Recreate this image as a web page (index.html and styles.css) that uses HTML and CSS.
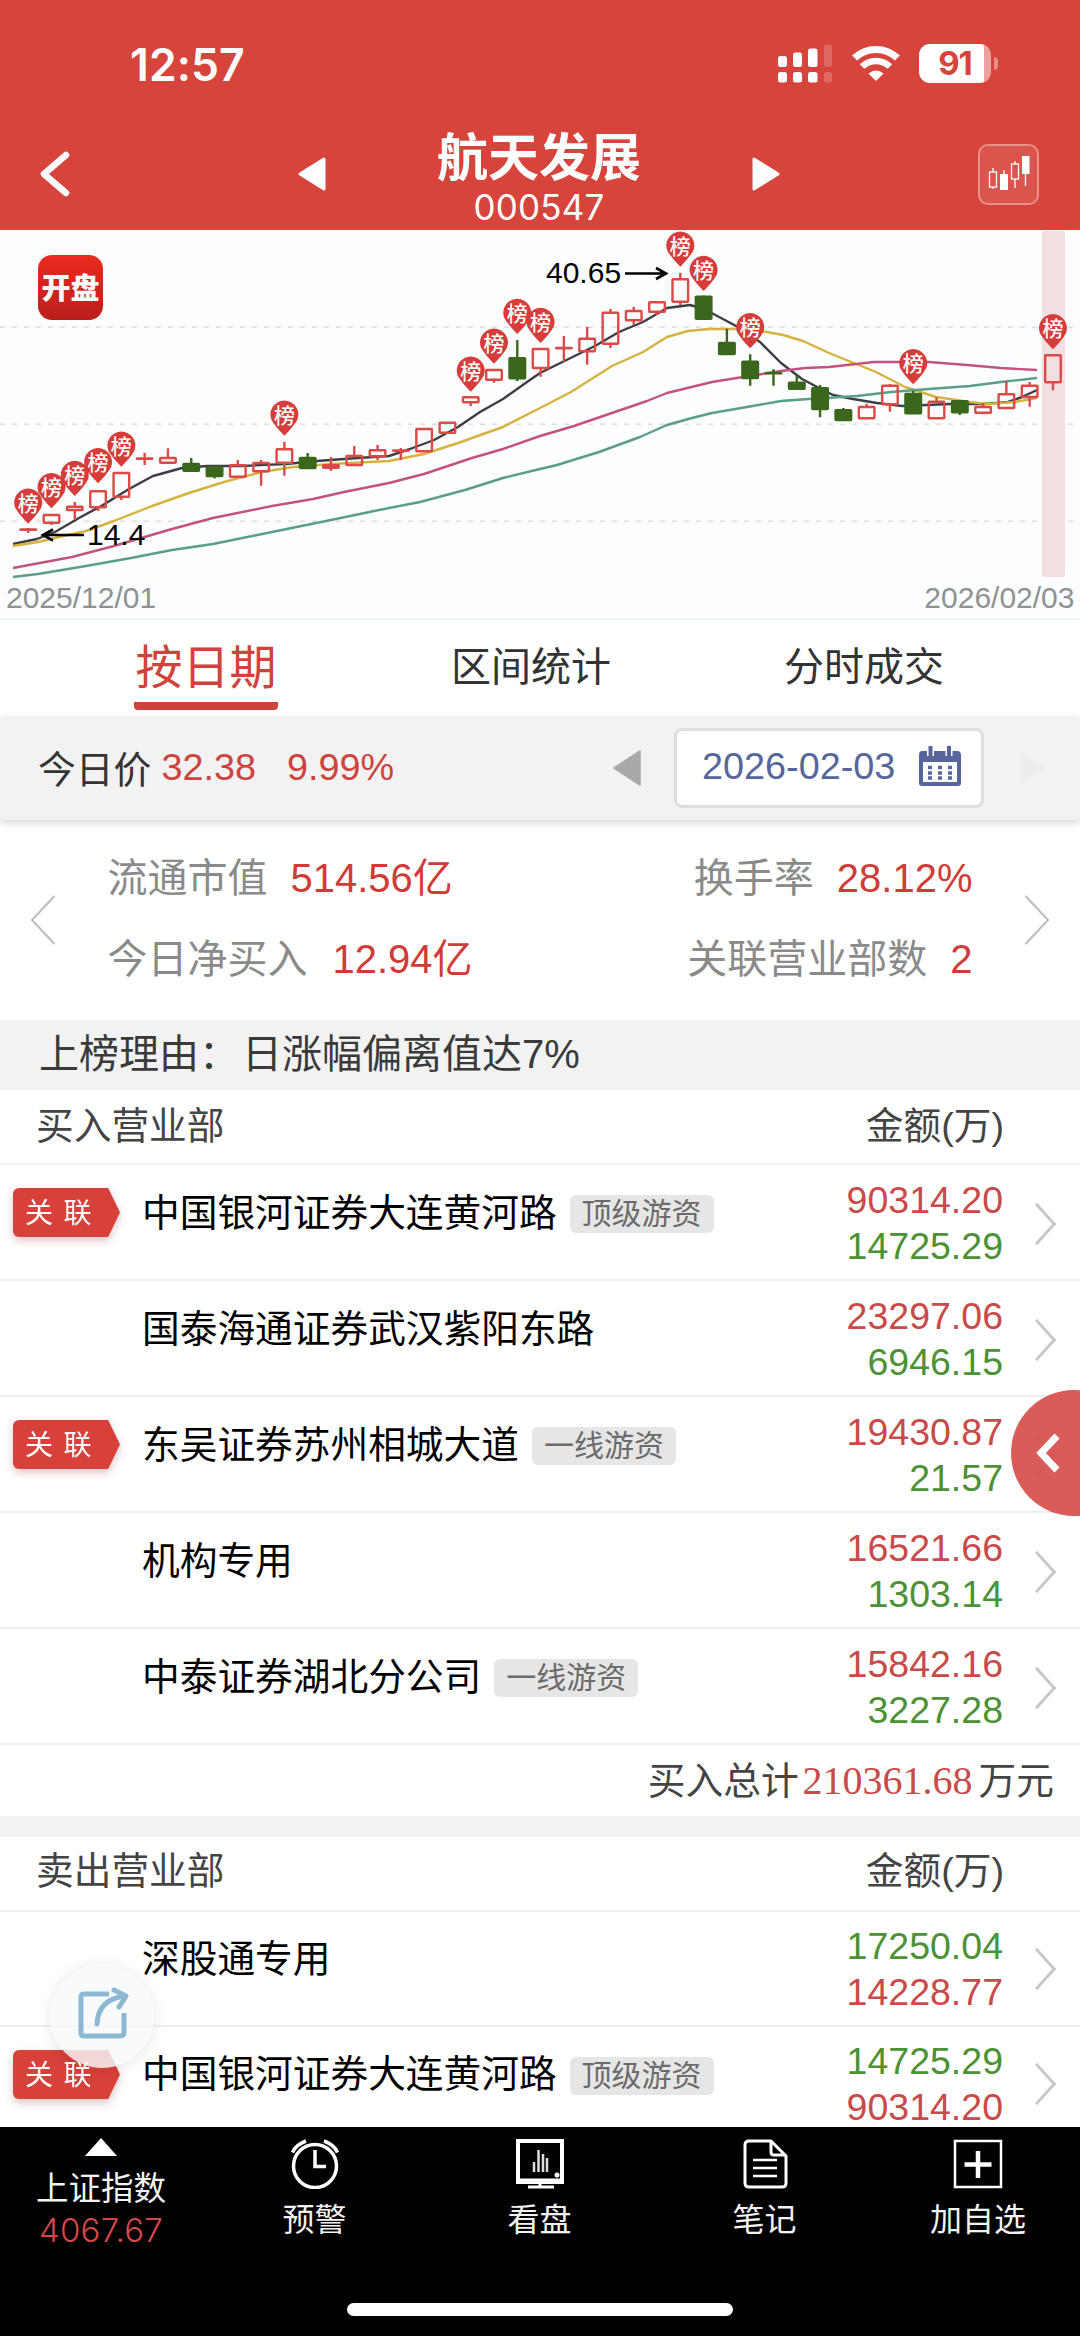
FILE: index.html
```html
<!DOCTYPE html>
<html lang="zh-CN">
<head>
  <meta charset="UTF-8" />
  <meta name="viewport" content="width=device-width, initial-scale=1.0, viewport-fit=cover" />
  <title>航天发展 000547</title>
  <link rel="stylesheet" href="styles.css">
</head>
<body>
  <div id="app">
    <!-- 状态栏 -->
    <div class="status-bar">
      <span class="status-time">12:57</span>
      <div class="status-icons">
        <svg width="55" height="40" viewBox="0 0 55 40" fill="#fff">
          <rect x="0" y="12" width="9" height="11" rx="2.500" />
          <rect x="15" y="8.500" width="9" height="14.500" rx="2.500" />
          <rect x="30" y="4.500" width="9.500" height="18.500" rx="2.500" />
          <rect x="46" y="0.500" width="8" height="22.500" rx="2.500" opacity=".2" />
          <rect x="0" y="28" width="9" height="10.500" rx="2.500" />
          <rect x="15" y="28" width="9" height="10.500" rx="2.500" />
          <rect x="30" y="28" width="9.500" height="10.500" rx="2.500" />
          <rect x="46" y="28" width="8" height="10.500" rx="2.500" opacity=".2" />
        </svg>
        <svg width="48" height="38" viewBox="0 0 48 38" fill="none" stroke="#fff">
          <path d="M2.500 14C14.500 2.500 33.500 2.500 45.500 14" stroke-width="7" />
          <path d="M10 22.500C18 15 30 15 38 22.500" stroke-width="6.500" />
          <path d="M24 37L16.500 29.500Q24 23.500 31.500 29.500Z" fill="#fff" stroke="none" />
        </svg>
        <div class="battery"><span>91</span></div>
      </div>
    </div>

    <!-- 标题栏 -->
    <header class="nav-header">
      <svg class="nav-back" width="34" height="48" viewBox="0 0 34 48"><path d="M28 5L6 24L28 43" fill="none" stroke="#fff" stroke-width="6.500" stroke-linecap="round" stroke-linejoin="round" /></svg>
      <svg class="nav-prev" width="28" height="34" viewBox="0 0 28 34"><path d="M26 2V32L2 17Z" fill="#fff" stroke="#fff" stroke-width="3" stroke-linejoin="round" /></svg>
      <div class="nav-title">
        <h1>航天发展</h1>
        <p>000547</p>
      </div>
      <svg class="nav-next" width="28" height="34" viewBox="0 0 28 34"><path d="M2 2V32L26 17Z" fill="#fff" stroke="#fff" stroke-width="3" stroke-linejoin="round" /></svg>
      <div class="nav-kline">
        <svg width="42" height="38" viewBox="0 0 42 38" fill="none" stroke="#fff" stroke-width="1.300">
          <rect x="1.500" y="16" width="7" height="15" /><path d="M5 12V16M5 31V33" />
          <rect x="12" y="18" width="8" height="16" fill="#fff" stroke="none" /><path d="M16 14V18" />
          <rect x="23.500" y="8" width="7" height="15" /><path d="M27 5V8M27 23V32" />
          <rect x="34" y="0" width="7.500" height="18" fill="#fff" stroke="none" /><path d="M37.500 18V30" />
        </svg>
      </div>
    </header>

    <!-- K线图 -->
    <section class="chart">
      <svg id="kline" width="1080" height="389" viewBox="0 0 1080 389">
        <g class="grid-line">
          <path d="M0 97.300H1080M0 194.300H1080M0 291.300H1080" />
        </g>
        <rect class="cursor-band" x="1042" y="1" width="23" height="346" rx="2" />
        <g class="ma-line">
          <polyline stroke="#3b3e44" points="13,314 37,309 55,302 79,288 103,275 129,259 153,246 182,238 207,236 241,236 286,234 317,231 358,228 389,226 410,219 434,210 458,197 480,182 503,169 527,152 540,143 595,116 619,102 643,92 667,78 690,75 704,79 738,97 760,112 781,133 802,149 819,158 833,165 853,169 877,173 902,176 950,174 984,174 1008,172 1022,167 1037,160" />
          <polyline stroke="#d6b23e" points="13,316 38,312 59,307 86,301 114,291 152,276 189,263 224,252 262,242 293,237 331,234 389,231 424,224 458,213 503,197 540,178 571,162 612,136 643,122 667,107 688,101 709,99 736,99 767,102 783,105 803,111 829,123 876,142 905,157 936,167 970,172 988,174 1015,172 1037,168" />
          <polyline stroke="#c4527f" points="13,338 72,327 114,316 172,299 213,288 272,276 313,269 344,262 389,253 424,244 472,228 503,219 540,206 574,196 609,184 647,171 667,163 712,152 743,147 781,141 805,138 829,137 874,132 929,132 967,135 1001,138 1037,140" />
          <polyline stroke="#5a9d8b" points="13,347 38,344 86,336 131,328 172,320 213,314 272,302 331,290 379,280 420,272 465,260 503,248 540,239 557,235 599,222 640,207 667,195 692,188 712,183 747,177 781,171 809,169 857,166 891,162 929,159 970,156 1001,152 1037,148" />
        </g>
        <g id="candles"></g>
        <g class="price-mark">
          <path d="M84 305H44M53 299.500L43 305L53 310.500" />
          <text x="87" y="314.500">14.4</text>
          <path d="M625 43.500H664M656 38L666 43.500L656 49" />
          <text x="546" y="52.500">40.65</text>
        </g>
        <text class="date-mark" x="6" y="378">2025/12/01</text>
        <text class="date-mark" x="1074.500" y="378" text-anchor="end">2026/02/03</text>
      </svg>
      <div class="brand">开盘</div>
    </section>

    <!-- 选项卡 -->
    <nav class="tabs">
      <span class="tab active">按日期</span>
      <span class="tab">区间统计</span>
      <span class="tab">分时成交</span>
    </nav>

    <div class="date-strip">
      <span class="label">今日价</span>
      <span class="price">32.38</span>
      <span class="price percent">9.99%</span>
      <svg class="date-prev" width="28" height="36" viewBox="0 0 28 36"><path d="M27 1V35L1 18Z" fill="#a9a9a9" stroke="#a9a9a9" stroke-width="1.500" stroke-linejoin="round" /></svg>
      <div class="date-box">
        <span>2026-02-03</span>
        <svg width="44" height="41" viewBox="0 0 44 41">
          <path d="M4 5H39Q43 5 43 9V37Q43 40 40 40H4Q1 40 1 37V9Q1 5 4 5Z" fill="#56669b" />
          <rect x="5" y="16" width="34" height="20" fill="#fff" />
          <path d="M12.500 0V10M31 0V10" stroke="#fff" stroke-width="7" />
          <path d="M12.500 0V10M31 0V10" stroke="#56669b" stroke-width="4" />
          <path d="M10 21.500H35M10 27H35M10 32H35" stroke="#56669b" stroke-width="3.500" stroke-dasharray="4 6" />
        </svg>
      </div>
      <svg class="date-next" width="28" height="36" viewBox="0 0 28 36"><path d="M1 1V35L27 18Z" fill="#ededed" /></svg>
    </div>

    <section class="summary">
      <svg class="arrow" width="26" height="50" viewBox="0 0 26 50"><path d="M24.500 1L2 25L24.500 49" /></svg>
      <div class="summary-grid">
        <div><label>流通市值</label><b>514.56亿</b></div>
        <div class="right"><label>换手率</label><b>28.12%</b></div>
        <div><label>今日净买入</label><b class="wide">12.94亿</b></div>
        <div class="right"><label>关联营业部数</label><b>2</b></div>
      </div>
      <svg class="arrow" width="26" height="50" viewBox="0 0 26 50"><path d="M1.500 1L24 25L1.500 49" /></svg>
    </section>

    <div class="reason">上榜理由：<span>日涨幅偏离值达7%</span></div>

    <!-- 买入 -->
    <section class="board buy">
      <div class="board-head"><span>买入营业部</span><span>金额(万)</span></div>
      <div class="row">
        <i class="badge">关 联</i>
        <span class="name">中国银河证券大连黄河路</span><em class="tag">顶级游资</em>
        <div class="amount"><p class="up">90314.20</p><p class="down">14725.29</p></div>
      </div>
      <div class="row">
        <span class="name">国泰海通证券武汉紫阳东路</span>
        <div class="amount"><p class="up">23297.06</p><p class="down">6946.15</p></div>
      </div>
      <div class="row">
        <i class="badge">关 联</i>
        <span class="name">东吴证券苏州相城大道</span><em class="tag">一线游资</em>
        <div class="amount"><p class="up">19430.87</p><p class="down">21.57</p></div>
      </div>
      <div class="row">
        <span class="name">机构专用</span>
        <div class="amount"><p class="up">16521.66</p><p class="down">1303.14</p></div>
      </div>
      <div class="row">
        <span class="name">中泰证券湖北分公司</span><em class="tag">一线游资</em>
        <div class="amount"><p class="up">15842.16</p><p class="down">3227.28</p></div>
      </div>
      <div class="total">买入总计<b>210361.68</b>万元</div>
    </section>

    <!-- 卖出 -->
    <section class="board sell">
      <div class="board-head"><span>卖出营业部</span><span>金额(万)</span></div>
      <div class="row">
        <span class="name">深股通专用</span>
        <div class="amount"><p class="down">17250.04</p><p class="up">14228.77</p></div>
      </div>
      <div class="row">
        <i class="badge">关 联</i>
        <span class="name">中国银河证券大连黄河路</span><em class="tag">顶级游资</em>
        <div class="amount"><p class="down">14725.29</p><p class="up">90314.20</p></div>
      </div>
    </section>

    <!-- 悬浮按钮 -->
    <div class="side-btn">
      <svg width="26" height="40" viewBox="0 0 26 40"><path d="M22 3L6 20L22 37" fill="none" stroke="#fff" stroke-width="7" /></svg>
    </div>
    <div class="share-btn">
      <svg width="52" height="54" viewBox="0 0 52 54" fill="none" stroke="#8db8d3" stroke-width="5" stroke-linecap="round" stroke-linejoin="round">
        <path d="M31 8H6Q3 8 3 11V47Q3 50 6 50H42Q46 50 46 46V27" stroke-linecap="butt" />
        <path d="M19 38Q20 14 46 10" />
        <path d="M36 4L48 10L41 21" />
      </svg>
    </div>

    <!-- 底部导航 -->
    <footer class="tabbar">
      <div class="tabbar-items">
        <div class="index-item">
          <i class="caret-up"></i>
          <span>上证指数</span>
          <strong>4067.67</strong>
        </div>
        <div class="bar-item">
          <svg width="50" height="50" viewBox="0 0 50 50" fill="none" stroke="#fff" stroke-width="3.500">
            <circle cx="25" cy="27" r="21.500" />
            <path d="M25 11V27.500H36" />
            <path d="M2.500 13.500Q6 5.500 16 2M47.500 13.500Q44 5.500 34 2" />
          </svg>
          <span>预警</span>
        </div>
        <div class="bar-item">
          <svg width="50" height="50" viewBox="0 0 50 50" fill="none" stroke="#fff">
            <rect x="3" y="2" width="44" height="41" stroke-width="4" />
            <path d="M3 42H47" stroke-width="5" />
            <path d="M25 43V48M13 48H39" stroke-width="3" />
            <path d="M19 33V23M23.500 33V11M28 33V15M32 33V19" stroke="#ddd" stroke-width="2.500" />
            <circle cx="42" cy="36" r="2.500" fill="#fff" stroke="none" />
          </svg>
          <span>看盘</span>
        </div>
        <div class="bar-item">
          <svg width="50" height="50" viewBox="0 0 50 50" fill="none" stroke="#fff" stroke-width="3" stroke-linejoin="round">
            <path d="M7 2H31L46 17V44Q46 48 42 48H9Q5 48 5 44V6Q5 2 9 2" />
            <path d="M31 2V13Q31 16 34 16H45" />
            <path d="M13 21H37M13 29H37M13 37H37" stroke-width="2.500" />
          </svg>
          <span>笔记</span>
        </div>
        <div class="bar-item last">
          <svg width="50" height="50" viewBox="0 0 50 50" fill="none" stroke="#fff">
            <rect x="2" y="2" width="46" height="46" stroke-width="2.500" />
            <path d="M25 12V39M11.500 25.500H38.500" stroke-width="4.500" />
          </svg>
          <span>加自选</span>
        </div>
      </div>
      <div class="home-bar"></div>
    </footer>
  </div>
  <script src="script.js"></script>
</body>
</html>
```
FILE: styles.css
```css
/* 全局样式重置 */
* {
  box-sizing: border-box;
  margin: 0;
  padding: 0;
}

body {
  font-family: 'Liberation Sans', 'Noto Sans CJK SC', sans-serif;
  background-color: #fff;
  overflow: hidden;
}

i, em {
  font-style: normal;
}

b, strong {
  font-weight: 400;
}

svg {
  display: block;
  flex-shrink: 0;
}

/* 应用容器 */
#app {
  position: relative;
  width: 1080px;
  height: 2336px;
  overflow: hidden;
}

/* 状态栏 */
.status-bar {
  display: flex;
  justify-content: space-between;
  height: 130px;
  padding: 44px 81px 0 130px;
  background: #d6443c;
  color: #fff;
}

.status-time {
  height: 44px;
  font: 600 44.5px/42px Inter, sans-serif;
  letter-spacing: 0.1px;
}

.status-icons {
  display: flex;
  align-items: flex-start;
  gap: 19px;
}

.battery {
  position: relative;
  width: 72px;
  height: 39px;
  margin-right: 8px;
  border-radius: 11px;
  background: linear-gradient(90deg, #fff 65px, #eba19d 65px);
  color: #d6443c;
  font: 700 33px/39px Inter, sans-serif;
  text-align: center;
  letter-spacing: -1px;
}

.battery::after {
  content: '';
  position: absolute;
  right: -7px;
  top: 13px;
  width: 4px;
  height: 13px;
  border-radius: 0 5px 5px 0;
  background: #e58f8a;
}

/* 标题栏 */
.nav-header {
  display: flex;
  height: 100px;
  padding: 0 41px 0 38px;
  background: #d6443c;
  color: #fff;
}

.nav-back {
  margin-top: 20px;
}

.nav-prev {
  margin: 27px 0 0 226px;
}

.nav-title {
  flex: 1;
  text-align: center;
}

.nav-title h1 {
  height: 57px;
  font-size: 51px;
  font-weight: 700;
  line-height: 57px;
}

.nav-title p {
  font: 400 35px/40px Inter, sans-serif;
  letter-spacing: 0.2px;
}

.nav-next {
  margin: 27px 198px 0 0;
}

.nav-kline {
  display: flex;
  align-items: center;
  justify-content: center;
  width: 61px;
  height: 61px;
  margin-top: 14px;
  border: 2px solid #ea918b;
  border-radius: 10px;
  background: #da554e;
}

/* K线图 */
.chart {
  position: relative;
  height: 390px;
  background: #fbfdfe;
  border-bottom: 2px solid #eef2f4;
}

.brand {
  position: absolute;
  left: 38px;
  top: 25px;
  width: 65px;
  height: 65px;
  border-radius: 14px;
  background: linear-gradient(#ee2a20, #b91f1b);
  color: #fff;
  font-size: 29px;
  font-weight: 900;
  line-height: 68px;
  text-align: center;
}

.grid-line {
  fill: none;
  stroke: #dcdde0;
  stroke-width: 1.5;
  stroke-dasharray: 5 7;
}

.cursor-band {
  fill: #f3dfe2;
}

.ma-line {
  fill: none;
  stroke-width: 2.4;
  stroke-linejoin: round;
}

.candle-up {
  fill: none;
  stroke: #dc4a48;
  stroke-width: 2.4;
}

.candle-down {
  fill: #3b671c;
  stroke: #3b671c;
  stroke-width: 2.4;
}

.pin {
  fill: #d63c3a;
}

.pin-text {
  fill: #fff;
  font-size: 21px;
  font-weight: 500;
  text-anchor: middle;
}

.price-mark path {
  fill: none;
  stroke: #000;
  stroke-width: 2.6;
}

.price-mark text {
  font-size: 30px;
}

.date-mark {
  fill: #8f9193;
  font-size: 30px;
}

/* 选项卡 */
.tabs {
  display: flex;
  height: 97px;
  padding-left: 134px;
}

.tab {
  height: 90px;
  color: #333;
  font-size: 40px;
  line-height: 95px;
}

.tab.active {
  width: 144px;
  margin-right: 173px;
  border-bottom: 8px solid #cf413b;
  border-radius: 4px;
  color: #d0423c;
  font-size: 47px;
  text-align: center;
}

.tab:last-child {
  margin-left: 173px;
}

/* 日期条 */
.date-strip {
  position: relative;
  display: flex;
  align-items: center;
  height: 103px;
  padding: 0 33px 2px 38px;
  background: #f2f2f2;
  box-shadow: 0 3px 8px rgba(0, 0, 0, 0.16);
  color: #333;
  font-size: 37.8px;
}

.label {
  padding-bottom: 3px;
}

.price {
  margin-left: 10px;
  color: #cf433e;
}

.percent {
  margin-left: 31px;
}

.date-prev {
  margin-left: auto;
  margin-right: 33px;
}

.date-box {
  display: flex;
  align-items: center;
  justify-content: space-between;
  width: 310px;
  height: 80px;
  margin-right: 35px;
  padding: 0 19px 3px 25px;
  border: 3px solid #dedede;
  border-radius: 8px;
  background: #fff;
  color: #56669b;
}

/* 概要 */
.summary {
  display: flex;
  justify-content: space-between;
  height: 200px;
  padding: 0 30px;
}

.arrow {
  margin-top: 75px;
  fill: none;
  stroke: #bdbdbd;
  stroke-width: 2;
}

.summary-grid {
  display: grid;
  grid-template-columns: auto auto;
  justify-content: space-between;
  width: 865px;
  padding-top: 18px;
  grid-template-rows: 81px 81px;
  font-size: 40px;
  line-height: 80px;
}

.summary-grid label {
  margin-right: 23px;
  color: #8a8a8a;
}

.summary-grid b {
  color: #cf3c37;
}

.summary-grid .wide {
  margin-left: 2px;
}

.summary-grid .right {
  text-align: right;
}

.reason {
  height: 70px;
  padding-left: 39px;
  background: #f2f2f2;
  color: #3a3a3a;
  font-size: 40px;
  line-height: 69px;
}

.reason span {
  margin-left: 3px;
}

/* 营业部列表 */
.board {
  font-size: 37.7px;
}

.board-head {
  display: flex;
  justify-content: space-between;
  height: 75px;
  padding: 0 76px 0 36px;
  border-bottom: 2px solid #f1f1f1;
  color: #444;
  line-height: 72px;
}

.sell .board-head {
  line-height: 69px;
}

.row {
  position: relative;
  display: flex;
  height: 116px;
  padding: 0 77px 0 142px;
  border-bottom: 2px solid #efefef;
}

.row::after {
  content: '';
  position: absolute;
  right: 28px;
  top: 44px;
  width: 27px;
  height: 27px;
  border: solid #c6c6c6;
  border-width: 3px 3px 0 0;
  transform: scaleX(0.9) rotate(45deg);
}

.name {
  height: 96px;
  color: #000;
  line-height: 96px;
}

.badge {
  position: absolute;
  left: 13px;
  top: 23px;
  width: 107px;
  height: 49px;
  padding-left: 12px;
  color: #fff;
  font-size: 28px;
  line-height: 51px;
  letter-spacing: 1.4px;
  filter: drop-shadow(0 4px 4px rgba(120, 40, 30, 0.25));
}

.badge::before {
  content: '';
  position: absolute;
  inset: 0;
  z-index: -1;
  border-radius: 6px 0 0 6px;
  background: #d8403a;
  clip-path: polygon(0 0, 89% 0, 100% 50%, 89% 100%, 0 100%);
}

.tag {
  height: 38px;
  margin: 30px 0 0 13px;
  padding: 0 12px;
  border-radius: 6px;
  background: #e6e6e6;
  color: #6b6b6b;
  font-size: 30px;
  line-height: 38px;
}

.amount {
  margin-left: auto;
  padding-top: 13px;
  font-size: 37.5px;
  line-height: 45.5px;
  text-align: right;
}

.sell .row {
  height: 115px;
}

.sell .name {
  line-height: 94px;
}

.sell .amount {
  padding-top: 12px;
}

.sell .row::after {
  top: 42px;
}

.up {
  color: #c94a48;
}

.down {
  color: #4c9136;
}

.total {
  height: 71px;
  padding-right: 26px;
  color: #444;
  line-height: 71px;
  text-align: right;
}

.total b {
  margin: 0 6px 0 4px;
  color: #c94a48;
  font-family: 'Liberation Serif', serif;
  font-size: 40px;
}

.sell {
  border-top: 21px solid #f2f2f2;
}

/* 悬浮按钮 */
.side-btn {
  position: absolute;
  right: -57px;
  top: 1390px;
  display: flex;
  align-items: center;
  width: 126px;
  height: 126px;
  padding-left: 24px;
  border-radius: 50%;
  background: rgba(214, 78, 74, 0.92);
}

.share-btn {
  position: absolute;
  left: 50px;
  top: 1964px;
  display: flex;
  align-items: center;
  justify-content: center;
  width: 104px;
  height: 104px;
  padding: 0 0 6px 3px;
  border-radius: 50%;
  background: rgba(248, 249, 250, 0.82);
  box-shadow: 0 2px 14px rgba(0, 0, 0, 0.1);
}

/* 底部导航 */
.tabbar {
  position: absolute;
  left: 0;
  bottom: 0;
  width: 1080px;
  height: 209px;
  background: #000;
  color: #f2f2f2;
}

.tabbar-items {
  display: flex;
  height: 176px;
  text-align: center;
}

.index-item,
.bar-item {
  display: flex;
  flex-direction: column;
  align-items: center;
}

.index-item {
  width: 202px;
  padding-top: 11px;
  font-size: 32.5px;
}

.index-item span {
  margin-top: 10px;
  line-height: 46px;
}

.index-item strong {
  color: #d6474a;
  font: 300 33px/36px Inter, sans-serif;
  letter-spacing: 0.3px;
}

.caret-up {
  border: solid transparent;
  border-width: 0 16px 18px;
  border-bottom-color: #fff;
}

.bar-item {
  width: 225px;
  padding-top: 12px;
  font-size: 32px;
}

.bar-item.last {
  width: 202px;
}

.bar-item span {
  margin-top: 8px;
  line-height: 46px;
}

.home-bar {
  width: 386px;
  height: 13px;
  margin: 0 auto;
  border-radius: 7px;
  background: #fff;
}
```
FILE: script.js
```javascript
// [涨跌, 最高, 实体上沿, 实体下沿, 最低, 榜标记]
const candles = [
  [1, 298, 299.5, 300.5, 303, 272.7],
  [1, 284, 284, 293.7, 295, 257.3],
  [1, 272, 275.7, 281, 290, 245],
  [1, 260, 260.3, 278.3, 281, 232.3],
  [1, 242, 242, 267.7, 270, 215.7],
  [1, 222.7, 228.5, 229.5, 235],
  [1, 218.3, 227, 233.7, 234],
  [0, 228, 233, 241.7, 242],
  [0, 236, 236.3, 247, 248.5],
  [1, 230, 234.3, 247.7, 248],
  [1, 230, 232, 242.3, 255.7],
  [1, 211.7, 218.3, 233.7, 245.7, 184.7],
  [0, 223, 227, 239, 239],
  [1, 227, 234.3, 238.7, 241],
  [1, 216, 225, 236, 236],
  [1, 215, 219.3, 227.3, 230],
  [1, 218, 220.5, 222, 230],
  [1, 198, 198, 222.3, 222],
  [1, 192, 191.7, 203.7, 204],
  [1, 166, 166.3, 173.3, 176, 140.7],
  [1, 139, 139, 150.7, 152.7, 112.7],
  [0, 110, 127.3, 149.3, 151, 83],
  [1, 118, 118, 139, 146.7, 92],
  [1, 106, 118, 119, 131.7],
  [1, 96.7, 107.7, 122.3, 134.7],
  [1, 79, 81.7, 114.7, 118],
  [1, 77, 80, 91.3, 95],
  [1, 71, 71.3, 82.7, 85],
  [1, 42.7, 48.3, 72.7, 75, 15.7],
  [0, 65.7, 65.7, 89.7, 89.7, 40],
  [0, 98.7, 112, 125, 125],
  [0, 124.3, 130.7, 149, 155.7, 97.3],
  [0, 139.3, 143, 144, 155.7],
  [0, 145.7, 151.7, 159.7, 160],
  [0, 155, 157.3, 180, 187.3],
  [0, 178, 179.3, 191, 191],
  [1, 173.7, 176, 189.3, 189],
  [1, 154, 154.7, 175.3, 181.7],
  [0, 160.7, 163, 184.3, 184, 133.3],
  [1, 167.3, 170.7, 189.3, 189],
  [0, 170, 170.3, 183.3, 185],
  [1, 173, 176, 183.7, 184],
  [1, 151.3, 163.3, 179, 179],
  [1, 152, 154.7, 168, 176.7],
  [1, 124, 124.3, 153.3, 160.3, 98.3]
];

const step = 23.29;
let bars = '';
let pins = '';

candles.forEach(([up, high, top, bottom, low, mark], i) => {
  const x = 28.2 + i * step;
  // 实体边框画在内侧
  const t = bottom - top > 3 ? top + 1 : top;
  const h = Math.max(bottom - top - 2, 0.4);
  bars += `<g class="${up ? 'candle-up' : 'candle-down'}">` +
    `<path d="M${x} ${high}V${t}M${x} ${t + h}V${low}" />` +
    `<rect x="${x - 7.8}" y="${t}" width="15.6" height="${h}" rx="0.5" /></g>`;
  if (mark) {
    pins += `<path class="pin" d="M${x - 13} ${mark + 5}A14 14 0 1 1 ${x + 13} ${mark + 5}Q${x + 9} ${mark + 12} ${x} ${mark + 21}Q${x - 9} ${mark + 12} ${x - 13} ${mark + 5}Z" />` +
      `<text class="pin-text" x="${x}" y="${mark + 8}">榜</text>`;
  }
});

document.getElementById('candles').innerHTML = bars + pins;
```
